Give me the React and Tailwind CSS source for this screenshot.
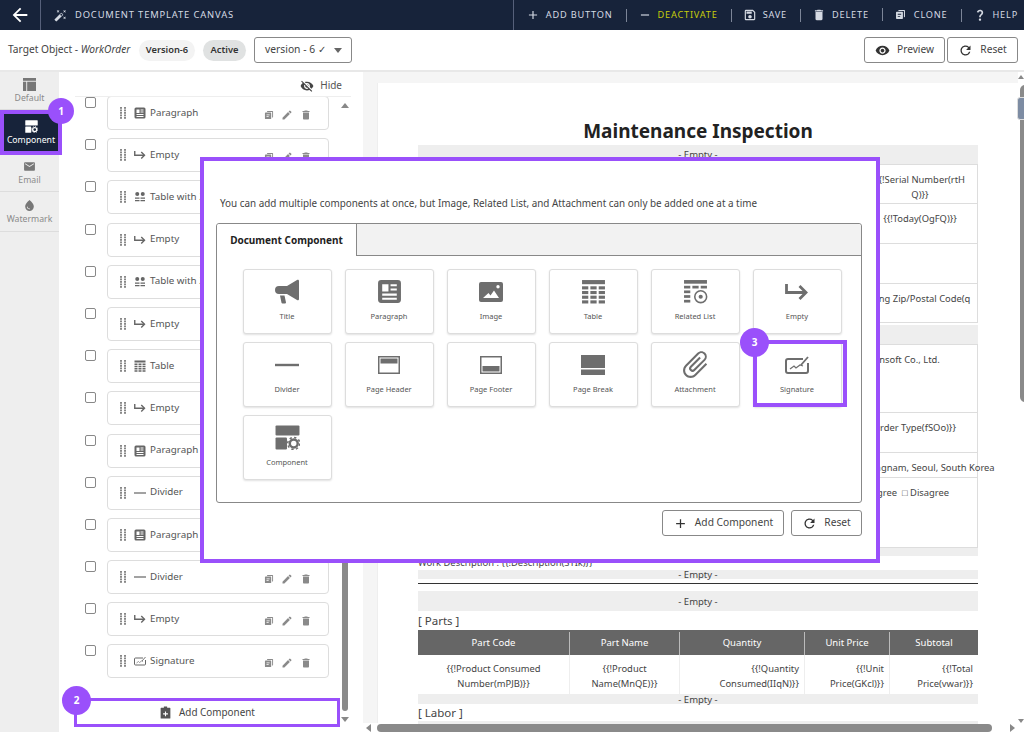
import {
  MdAdd,
  MdArrowBack,
  MdAttachFile,
  MdAutoFixHigh,
  MdDelete,
  MdEdit,
  MdEmail,
  MdOutlineSave,
  MdQuestionMark,
  MdRefresh,
  MdRemove,
  MdVisibility,
  MdVisibilityOff,
  MdWaterDrop,
} from "react-icons/md";

const Clone = ({ className }) => (
  <svg viewBox="0 0 16 16" className={className} fill="currentColor">
    <path d="M5 1.500h8.500a1 1 0 0 1 1 1V11a1 1 0 0 1-1 1H13V3H5z" />
    <path d="M2.500 4h8a1 1 0 0 1 1 1v8.500a1 1 0 0 1-1 1h-8a1 1 0 0 1-1-1V5a1 1 0 0 1 1-1zm1.500 3v1.300h5V7zm0 3v1.300h3.500V10z" fillRule="evenodd" />
  </svg>
);

const Grip = () => (
  <svg viewBox="0 0 6 12" className="h-[12px] w-[6px] text-[#888]" fill="currentColor">
    {[0, 2.5, 5, 7.5, 10].map((y) => (
      <g key={y}>
        <rect x="0" y={y} width="2" height="1.800" />
        <rect x="4" y={y} width="2" height="1.800" />
      </g>
    ))}
  </svg>
);

const MegaphoneIcon = ({ className }) => (
  <svg viewBox="0 0 24 25" className={className} fill="currentColor">
    <path d="M4 7h8L22 1c1-.6 2 0 2 1v18c0 1-1 1.600-2 1l-10-6H4a4 4 0 0 1-4-4V11a4 4 0 0 1 4-4z" />
    <path d="M5 16.500h4.500l1.500 7a1 1 0 0 1-1 1H7.500a1 1 0 0 1-1-.8z" />
  </svg>
);

const PictureIcon = ({ className }) => (
  <svg viewBox="0 0 24 20" className={className} fill="currentColor">
    <path fillRule="evenodd" d="M2 0h20a2 2 0 0 1 2 2v16a2 2 0 0 1-2 2H2a2 2 0 0 1-2-2V2a2 2 0 0 1 2-2zm2 16h16l-5-7.500-3.500 5-2-2.500zM19 3a1.700 1.700 0 1 0 0 3.400A1.700 1.700 0 0 0 19 3z" />
  </svg>
);

const EmptyIcon = ({ className }) => (
  <svg viewBox="0 0 24 18" className={className} fill="none" stroke="currentColor" strokeWidth="2.800">
    <path d="M1.500 1v8.500h19" />
    <path d="M14.500 3l6.500 6.500-6.500 6.500" />
  </svg>
);

const ParagraphIcon = ({ className }) => (
  <svg viewBox="0 0 24 24" className={className} fill="currentColor">
    <path fillRule="evenodd" d="M4 1h16a3 3 0 0 1 3 3v16a3 3 0 0 1-3 3H4a3 3 0 0 1-3-3V4a3 3 0 0 1 3-3zm1 4v7h6V5zm8 0v2h6V5zm0 4v2h6V9zM5 14v2h14v-2zm0 4v2h14v-2z" />
  </svg>
);

const TableIcon = ({ className }) => (
  <svg viewBox="0 0 24 24" className={className} fill="currentColor">
    <rect x="1" y="1" width="22" height="4" />
    {[7, 11.5, 16, 20.5].map((y) => (
      <g key={y}>
        <rect x="1" y={y} width="6" height="3" />
        <rect x="9" y={y} width="6" height="3" />
        <rect x="17" y={y} width="6" height="3" />
      </g>
    ))}
  </svg>
);

const RelatedIcon = ({ className }) => (
  <svg viewBox="0 0 24 24" className={className} fill="currentColor">
    <rect x="1" y="1" width="22" height="3.500" />
    {[6.5, 11, 15.5, 20].map((y) => (
      <rect key={y} x="1" y={y} width="6" height="2.600" />
    ))}
    <rect x="9" y="6.500" width="6" height="2.600" />
    <rect x="17" y="6.500" width="6" height="2.600" />
    <circle cx="17" cy="17" r="5.700" fill="none" stroke="currentColor" strokeWidth="1.500" />
    <circle cx="17" cy="17" r="2" />
  </svg>
);

const DividerIcon = ({ className }) => (
  <svg viewBox="0 0 24 24" className={className} fill="currentColor">
    <rect x="0" y="10.800" width="24" height="2.400" />
  </svg>
);

const HeaderIcon = ({ className }) => (
  <svg viewBox="0 0 22 18" className={className} fill="currentColor">
    <path fillRule="evenodd" d="M0 0h22v18H0zm1.500 1.500v15h19v-15z" />
    <rect x="2.500" y="2.500" width="17" height="5" />
  </svg>
);

const FooterIcon = ({ className }) => (
  <svg viewBox="0 0 22 18" className={className} fill="currentColor">
    <path fillRule="evenodd" d="M0 0h22v18H0zm1.500 1.500v15h19v-15z" />
    <rect x="2.500" y="10" width="17" height="5.500" />
  </svg>
);

const BreakIcon = ({ className }) => (
  <svg viewBox="0 0 24 20" className={className} fill="currentColor">
    <rect x="0" y="0" width="24" height="13" />
    <rect x="0" y="14.500" width="24" height="5.500" />
  </svg>
);

const RailTableIcon = ({ className }) => (
  <svg viewBox="0 0 14 14" className={className} fill="currentColor">
    <rect x="0" y="0" width="14" height="3" />
    <rect x="0" y="4" width="3.500" height="10" />
    <rect x="4.500" y="4" width="9.500" height="10" />
  </svg>
);

const SignatureIcon = ({ className }) => (
  <svg viewBox="0 0 24 20" className={className} fill="none" stroke="currentColor">
    <path strokeWidth="2" d="M18 4H3a2 2 0 0 0-2 2v10a2 2 0 0 0 2 2h18a2 2 0 0 0 2-2V8" />
    <path strokeWidth="1.300" d="M5 14l4-3 2 2 4-3 3 1" />
    <path strokeWidth="1.800" d="M16 10l7-8" />
  </svg>
);

const ComponentIcon = ({ className }) => (
  <svg viewBox="0 0 24 24" className={className} fill="currentColor">
    <rect x="0.500" y="0.500" width="23" height="9.500" rx="1" />
    <rect x="0.500" y="12" width="11" height="11.500" rx="1" />
    <circle cx="18" cy="17.700" r="3.800" fill="none" stroke="currentColor" strokeWidth="2.400" />
    <circle cx="18" cy="17.700" r="5.800" fill="none" stroke="currentColor" strokeWidth="1.400" strokeDasharray="2.200 2.300" />
  </svg>
);

const TwoColIcon = ({ className }) => (
  <svg viewBox="0 0 24 24" className={className} fill="currentColor">
    <circle cx="6.500" cy="6" r="4" />
    <circle cx="17.500" cy="6" r="4" />
    <rect x="2" y="13" width="9" height="2.500" />
    <rect x="13" y="13" width="9" height="2.500" />
    <rect x="2" y="18" width="9" height="2.500" />
    <rect x="13" y="18" width="9" height="2.500" />
  </svg>
);

const AddListIcon = ({ className }) => (
  <svg viewBox="0 0 24 24" className={className} fill="currentColor">
    <path fillRule="evenodd" d="M9 1h6v2h5a1 1 0 0 1 1 1v18a1 1 0 0 1-1 1H4a1 1 0 0 1-1-1V4a1 1 0 0 1 1-1h5zm2 9v3.500H7.500v2H11V19h2v-3.500h3.500v-2H13V10z" />
  </svg>
);

const NAV_ITEMS = [
  { Icon: MdAdd, label: "ADD BUTTON", iconClass: "text-[16px]", color: "text-[#d5dae3]" },
  { Icon: MdRemove, label: "DEACTIVATE", iconClass: "text-[16px] text-[#d5dae3]", color: "text-[#c6cc0a]" },
  { Icon: MdOutlineSave, label: "SAVE", iconClass: "text-[14px]", color: "text-[#d5dae3]" },
  { Icon: MdDelete, label: "DELETE", iconClass: "text-[14px]", color: "text-[#d5dae3]" },
  { Icon: Clone, label: "CLONE", iconClass: "h-[11px] w-[11px]", color: "text-[#d5dae3]" },
  { Icon: MdQuestionMark, label: "HELP", iconClass: "text-[14px]", color: "text-[#d5dae3]" },
];

const RAIL_ITEMS = [
  { Icon: RailTableIcon, label: "Default", h: "h-[38px]" },
  { Icon: ComponentIcon, label: "Component", h: "h-[45px]", active: true },
  { Icon: MdEmail, label: "Email", h: "h-[37px]" },
  { Icon: MdWaterDrop, label: "Watermark", h: "h-[40px]" },
];

const LIST_ITEMS = [
  { Icon: ParagraphIcon, label: "Paragraph" },
  { Icon: EmptyIcon, label: "Empty" },
  { Icon: TwoColIcon, label: "Table with 2" },
  { Icon: EmptyIcon, label: "Empty" },
  { Icon: TwoColIcon, label: "Table with 2" },
  { Icon: EmptyIcon, label: "Empty" },
  { Icon: TableIcon, label: "Table" },
  { Icon: EmptyIcon, label: "Empty" },
  { Icon: ParagraphIcon, label: "Paragraph" },
  { Icon: DividerIcon, label: "Divider" },
  { Icon: ParagraphIcon, label: "Paragraph" },
  { Icon: DividerIcon, label: "Divider" },
  { Icon: EmptyIcon, label: "Empty" },
  { Icon: SignatureIcon, label: "Signature" },
];

const TILES = [
  { Icon: MegaphoneIcon, label: "Title", size: "h-[25px] w-[24px]" },
  { Icon: ParagraphIcon, label: "Paragraph", size: "h-[25px] w-[25px]" },
  { Icon: PictureIcon, label: "Image", size: "h-[20px] w-[24px]" },
  { Icon: TableIcon, label: "Table", size: "h-[25px] w-[25px]" },
  { Icon: RelatedIcon, label: "Related List", size: "h-[25px] w-[25px]" },
  { Icon: EmptyIcon, label: "Empty", size: "h-[18px] w-[24px]" },
  { Icon: DividerIcon, label: "Divider", size: "h-[24px] w-[24px]" },
  { Icon: HeaderIcon, label: "Page Header", size: "h-[18px] w-[22px]" },
  { Icon: FooterIcon, label: "Page Footer", size: "h-[18px] w-[22px]" },
  { Icon: BreakIcon, label: "Page Break", size: "h-[20px] w-[24px]" },
  { Icon: MdAttachFile, label: "Attachment", size: "h-[33px] w-[33px] rotate-45" },
  { Icon: SignatureIcon, label: "Signature", size: "h-[20px] w-[24px]", highlight: true },
  { Icon: ComponentIcon, label: "Component", size: "h-[25px] w-[25px]" },
];

const DOC_ROWS = [
  { h: "h-[39px]", text: "{{!Serial Number(rtH\nQ)}}", cls: "text-center" },
  { h: "h-[40px]", text: "{{!Today(OgFQ)}}", cls: "text-center" },
  { h: "h-[40px]", text: "", cls: "" },
  { h: "h-[39px]", text: "Billing Zip/Postal Code(q", cls: "text-right pr-[7px]" },
];

const DOC_ROWS_2 = [
  { h: "h-[68px]", text: "Mainsoft Co., Ltd.", cls: "text-right pr-[51px]" },
  { h: "h-[40px]", text: "{{!Order Type(fSOo)}}", cls: "text-right pr-[40px]" },
  { h: "h-[25px]", text: "Gangnam, Seoul, South Korea", cls: "text-right pr-[27px]" },
  { h: "h-[70px]", text: "□ Agree  □ Disagree", cls: "text-right pr-[52px]" },
];

const PART_COLUMNS = [
  { w: "w-[152px]", head: "Part Code", body: ["{{!Product Consumed", "Number(mPJB)}}"], align: "text-center" },
  { w: "w-[110px]", head: "Part Name", body: ["{{!Product", "Name(MnQE)}}"], align: "text-center" },
  { w: "w-[125px]", head: "Quantity", body: ["{{!Quantity", "Consumed(IIqN)}}"], align: "text-right" },
  { w: "w-[85px]", head: "Unit Price", body: ["{{!Unit", "Price(GKcl)}}"], align: "text-right" },
  { w: "flex-1", head: "Subtotal", body: ["{{!Total", "Price(vwar)}}"], align: "text-right" },
];

const Badge = ({ n, className }) => (
  <div className={`absolute z-30 flex items-center justify-center rounded-full bg-[#9a50fb] text-[10px] font-bold text-white ${className}`}>
    {n}
  </div>
);

const EmptyBar = ({ className }) => (
  <div className={`flex items-center justify-center bg-[#eeeeee] pt-[2px] text-[9.500px] text-[#444] ${className}`}>
    - Empty -
  </div>
);

const DocRow = ({ row }) => (
  <div className={`flex border border-t-0 border-[#ddd] ${row.h}`}>
    <div className="flex-1 border-r border-[#ddd]" />
    <div className={`w-[114px] whitespace-pre pt-[6.500px] text-[9.400px] leading-[15px] text-[#444] ${row.cls}`}>
      {row.text}
    </div>
  </div>
);

const OutlineButton = ({ Icon, label, className }) => (
  <button
    type="button"
    className={`flex h-[26px] items-center justify-center gap-[7px] rounded-[3px] border border-[#888] bg-white text-[10.200px] text-[#444] ${className}`}
  >
    <Icon className="text-[15px] text-[#333]" />
    {label}
  </button>
);

export default function App() {
  return (
    <div className="relative h-[732px] w-[1024px] overflow-hidden bg-white font-['Noto_Sans','Open_Sans',sans-serif]">
      <header className="flex h-[30px] items-center bg-[#17233a] text-[#d5dae3]">
        <div className="flex h-full w-[41px] items-center justify-center border-r border-[#56607a]">
          <MdArrowBack className="text-[22px] text-white" />
        </div>
        <MdAutoFixHigh className="ml-[13px] text-[13px]" />
        <span className="ml-[8px] text-[9.400px] tracking-[0.85px]">DOCUMENT TEMPLATE CANVAS</span>
        <nav className="ml-auto flex h-full items-center border-l border-[#56607a] pl-[12px] pr-[6px]">
          {NAV_ITEMS.map(({ Icon, label, iconClass, color }, i) => (
            <div key={label} className="flex items-center">
              {i > 0 && <div className="ml-[13px] mr-[11px] h-[13px] w-px bg-[#7c8598]" />}
              <div className={`flex items-center gap-[6px] ${color}`}>
                <span className="flex w-[14px] justify-center">
                  <Icon className={iconClass} />
                </span>
                <span className="text-[9.200px] tracking-[0.8px]">{label}</span>
              </div>
            </div>
          ))}
        </nav>
      </header>

      <div className="flex h-[42px] items-center border-b-2 border-[#e8e8e8] pl-[8px] pr-[6px] text-[#444]">
        <span className="w-[123px] whitespace-nowrap text-[10.200px]">
          Target Object - <em>WorkOrder</em>
        </span>
        <span className="ml-[8px] flex h-[21px] w-[56px] items-center justify-center rounded-full bg-[#f3f3f3] text-[9.300px] font-semibold text-[#333]">
          Version-6
        </span>
        <span className="ml-[8px] flex h-[21px] w-[43px] items-center justify-center rounded-full bg-[#e0e2e2] text-[9.300px] font-semibold text-[#333]">
          Active
        </span>
        <div className="ml-[8px] flex h-[26px] w-[98px] items-center justify-between rounded-[3px] border border-[#888] pl-[10px] pr-[9px] text-[10.300px]">
          <span>version - 6 ✓</span>
          <span className="h-0 w-0 border-x-[4px] border-t-[5px] border-x-transparent border-t-[#666]" />
        </div>
        <OutlineButton Icon={MdVisibility} label="Preview" className="ml-auto w-[81px]" />
        <OutlineButton Icon={MdRefresh} label="Reset" className="ml-[2px] w-[71px]" />
      </div>

      <div className="flex h-[660px]">
        <aside className="w-[59px] shrink-0 bg-[#eeeeee]">
          {RAIL_ITEMS.map(({ Icon, label, h, active }) => (
            <div
              key={label}
              className={`flex flex-col items-center justify-center gap-[1px] ${h} ${
                active
                  ? "relative z-20 w-[62px] border-[4px] border-[#9a50fb] bg-[#17233a] text-white"
                  : "border-b border-[#ddd] text-[#8a8a8a]"
              }`}
            >
              <Icon className={active ? "h-[13px] w-[13px]" : "h-[13px] w-[13px] text-[#777]"} />
              <span className={`text-[8.700px] leading-[12px] ${active ? "-mx-1 whitespace-nowrap" : ""}`}>{label}</span>
            </div>
          ))}
        </aside>

        <section className="relative w-[304px] shrink-0">
          <div className="ml-[16px] mr-[12px] flex h-[25px] items-center justify-end gap-[6px] border-b border-[#eee] pr-[9px] pt-[3px] text-[10px] text-[#555]">
            <MdVisibilityOff className="text-[14px] text-[#444]" />
            Hide
          </div>
          <div className="h-[601px] overflow-hidden">
            <div className="-mt-[1px]">
              {LIST_ITEMS.map(({ Icon, label }, i) => (
                <div key={i} className="mb-[8.200px] flex h-[34px] items-start">
                  <span className="ml-[26px] mt-[1px] h-[11px] w-[11px] rounded-[2px] border border-[#888] bg-white" />
                  <div className="ml-[11px] flex h-full w-[222px] items-center rounded-[4px] border border-[#ddd] bg-white pl-[12px] pr-[16px] text-[9.800px] text-[#555]">
                    <Grip />
                    <Icon className="ml-[8px] h-[12px] w-[12px] shrink-0 text-[#666]" />
                    <span className="ml-[4px] whitespace-nowrap">{label}</span>
                    <div className="ml-auto flex items-center gap-[7px] pt-[3px] text-[#8a8a8a]">
                      <Clone className="h-[10px] w-[10px]" />
                      <MdEdit className="text-[12px]" />
                      <MdDelete className="text-[12px]" />
                    </div>
                  </div>
                </div>
              ))}
            </div>
          </div>
          <div className="relative z-20 ml-[15px] flex h-[29px] w-[266px] items-center justify-center gap-[7px] border-[3px] border-[#9a50fb] bg-white text-[9.900px] text-[#444]">
            <AddListIcon className="h-[13px] w-[13px] text-[#555]" />
            Add Component
          </div>

          {/* list scrollbar */}
          <span className="absolute left-[282px] top-[31px] h-0 w-0 border-x-[4px] border-b-[5px] border-x-transparent border-b-[#888]" />
          <div className="absolute left-[283px] top-[128px] h-[511px] w-[6px] rounded-full bg-[#8a8a8a]" />
          <span className="absolute left-[282px] top-[645px] h-0 w-0 border-x-[4px] border-t-[5px] border-x-transparent border-t-[#888]" />
        </section>

        <main className="relative flex-1 overflow-hidden">
          <div className="h-[11px] w-[655px] bg-[#f5f5f5]" />
          <div className="flex h-[640px]">
            <div className="w-[14px] bg-[#f5f5f5]" />
            <div className="flex-1 border-l border-[#eee] pl-[40px] pr-[46px]">
              <h1 className="flex h-[62px] items-end justify-center text-[19px] font-bold leading-[28px] text-[#222]">
                Maintenance Inspection
              </h1>
              <EmptyBar className="h-[19px]" />
              <div className="border-t border-[#ddd]" />
              {DOC_ROWS.map((row, i) => (
                <DocRow key={i} row={row} />
              ))}
              <EmptyBar className="mt-[2px] h-[19px]" />
              <div className="border-t border-[#ddd]" />
              {DOC_ROWS_2.map((row, i) => (
                <DocRow key={i} row={row} />
              ))}
              <div className="h-[8px] bg-[#eeeeee]" />
              <div className="h-[14px] text-[9.400px] leading-[14px] text-[#444]">
                Work Description : {"{{!Description(STIk)}}"}
              </div>
              <EmptyBar className="h-[9px]" />
              <div className="mt-[4px] h-[1px] bg-[#333]" />
              <EmptyBar className="mt-[7px] h-[20px]" />
              <div className="flex h-[19px] items-center text-[11.500px] text-[#444]">[ Parts ]</div>
              <div className="flex h-[25px] bg-[#666] pt-[2px] text-[9.500px] text-white">
                {PART_COLUMNS.map((col) => (
                  <div key={col.head} className={`flex items-center justify-center border-r border-[#bbb] last:border-r-0 ${col.w}`}>
                    {col.head}
                  </div>
                ))}
              </div>
              <div className="flex h-[39px]">
                {PART_COLUMNS.map((col) => (
                  <div
                    key={col.head}
                    className={`border-r border-[#eee] px-[5px] pt-[6px] text-[9.400px] leading-[15px] text-[#444] last:border-r-0 ${col.w} ${col.align}`}
                  >
                    {col.body.map((line) => (
                      <div key={line} className="whitespace-nowrap">{line}</div>
                    ))}
                  </div>
                ))}
              </div>
              <EmptyBar className="h-[10px]" />
              <div className="flex h-[17px] items-center text-[11.500px] text-[#444]">[ Labor ]</div>
              <div className="h-[3px] bg-[#eeeeee]" />
            </div>
          </div>

          {/* canvas scrollbars */}
          <div className="absolute left-[14px] top-[652px] h-[8px] w-[615px] rounded-full bg-[#8a8a8a]" />
          <span className="absolute left-[3px] top-[652px] h-0 w-0 border-y-[4px] border-r-[5px] border-y-transparent border-r-[#888]" />
          <span className="absolute left-[647px] top-[652px] h-0 w-0 border-y-[4px] border-l-[5px] border-y-transparent border-l-[#888]" />
          <span className="absolute left-[655px] top-[3px] h-0 w-0 border-x-[3px] border-b-[4px] border-x-transparent border-b-[#888]" />
          <div className="absolute left-[657px] top-[13px] h-[317px] w-[5px] rounded-l-full bg-[#8a8a8a]" />
          <div className="absolute left-[654px] top-[25px] h-[23px] w-[8px] rounded-l-[3px] border border-[#ddd] bg-[#7d8ca3]" />
          <span className="absolute left-[655px] top-[647px] h-0 w-0 border-x-[3px] border-t-[4px] border-x-transparent border-t-[#888]" />
        </main>
      </div>

      {/* modal */}
      <div className="absolute left-[200px] top-[157px] z-10 h-[406px] w-[680px] border-[4px] border-[#9a50fb] bg-white px-[12px] text-[#444]">
        <p className="whitespace-nowrap pl-[4px] pt-[34px] text-[9.900px] leading-[16px]">
          You can add multiple components at once, but Image, Related List, and Attachment can only be added one at a time
        </p>
        <div className="mt-[12px] h-[280px] w-[646px] rounded-[3px] border border-[#888]">
          <div className="flex h-[32px] rounded-t-[3px] bg-[#f2f2f2]">
            <div className="flex w-[140px] items-center justify-center rounded-tl-[3px] border-r border-[#888] bg-white text-[10px] font-bold text-[#222]">
              Document Component
            </div>
            <div className="flex-1 border-b border-[#888]" />
          </div>
          <div className="grid grid-cols-[repeat(6,89px)] gap-x-[13px] gap-y-[8px] pl-[25.500px] pt-[13px]">
            {TILES.map(({ Icon, label, size, highlight }) => (
              <div
                key={label}
                className="relative flex h-[65px] w-[89px] flex-col items-center rounded-[3px] border border-[#ddd] bg-white shadow-[0_1px_2px_rgba(0,0,0,0.12)]"
              >
                <span className="flex h-[37px] items-center justify-center pt-[6px] text-[#6e6e6e]">
                  <Icon className={size} />
                </span>
                <span className="mt-[3px] text-[7.500px] leading-[12px] text-[#555]">{label}</span>
                {highlight && (
                  <span className="absolute -left-[1px] -top-[3px] h-[67px] w-[94px] border-[4px] border-[#9a50fb]" />
                )}
              </div>
            ))}
          </div>
        </div>
        <div className="mt-[7px] flex w-[646px] justify-end gap-[7px]">
          <OutlineButton Icon={MdAdd} label="Add Component" className="w-[122px]" />
          <OutlineButton Icon={MdRefresh} label="Reset" className="w-[71px]" />
        </div>
      </div>

      <Badge n="1" className="left-[48px] top-[98px] h-[26px] w-[26px]" />
      <Badge n="2" className="left-[62px] top-[686px] h-[29px] w-[29px]" />
      <Badge n="3" className="left-[740px] top-[328px] h-[29px] w-[29px]" />
    </div>
  );
}
